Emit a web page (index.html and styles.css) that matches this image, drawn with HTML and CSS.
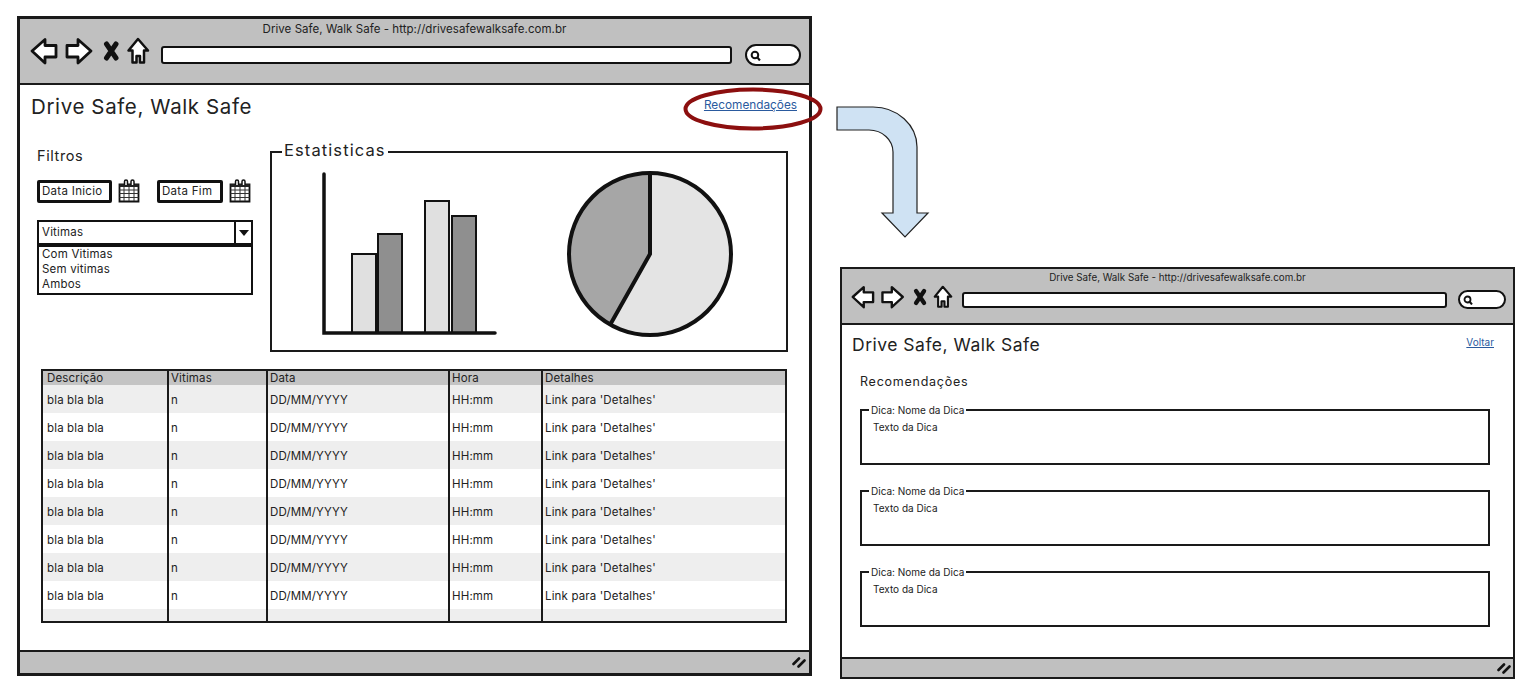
FILE: index.html
```html
<!DOCTYPE html>
<html lang="pt-BR">
<head>
  <meta charset="UTF-8">
  <title>Drive Safe, Walk Safe</title>
  <link rel="stylesheet" href="styles.css">
</head>
<body>
  <svg class="defs" width="0" height="0">
    <symbol id="toolbar-icons" viewBox="30 36 120 28">
      <path d="M32 50 L45 38.500 V44.500 H56 V56 H45 V62 Z" fill="#fff" stroke="#111" stroke-width="2.800" stroke-linejoin="round"/>
      <path d="M91 50 L78 38.500 V44.500 H67 V56 H78 V62 Z" fill="#fff" stroke="#111" stroke-width="2.800" stroke-linejoin="round"/>
      <path d="M106.500 43 L116 57 M116 43 L106.500 57" fill="none" stroke="#111" stroke-width="5" stroke-linecap="round"/>
      <path d="M138 38 L128.500 49.500 H132.500 V61.500 H136.500 V55 H140 V61.500 H144 V49.500 H148 Z" fill="#fff" stroke="#111" stroke-width="2.500" stroke-linejoin="round"/>
    </symbol>
    <symbol id="calendar" viewBox="0 0 22 24">
      <path d="M1.500 5.500 H20.500 V22.500 H1.500 Z" fill="#fff" stroke="#111" stroke-width="1.800"/>
      <path d="M1.500 11 H20.500 M1.500 14.500 H20.500 M1.500 18.500 H20.500 M6 8 V22 M11 8 V22 M16 8 V22" fill="none" stroke="#333" stroke-width="1"/>
      <path d="M1.500 5 H20.500 V8 H1.500 Z" fill="#222"/>
      <path d="M6.500 6 V2.500 A1.500 1.500 0 0 1 9.500 2.500 V6 M13 6 V2.500 A1.500 1.500 0 0 1 16 2.500 V6" fill="#fff" stroke="#111" stroke-width="1.500"/>
    </symbol>
    <symbol id="loupe" viewBox="0 0 10 10">
      <circle cx="4.500" cy="4.500" r="3" fill="none" stroke="#111" stroke-width="1.800"/>
      <path d="M6.500 6.500 L9 9.500" stroke="#111" stroke-width="2"/>
    </symbol>
    <symbol id="grip" viewBox="0 0 14 11">
      <path d="M1.500 7 L7 1.500 M6.500 9.500 L12.500 3.500" stroke="#111" stroke-width="2.600" stroke-linecap="round"/>
    </symbol>
  </svg>

  <section class="window window-main">
    <header class="titlebar">
      <div class="caption">Drive Safe, Walk Safe - http://drivesafewalksafe.com.br</div>
      <div class="toolbar">
        <svg class="tool-icons"><use href="#toolbar-icons"/></svg>
        <div class="urlbar"></div>
        <div class="search"><svg class="loupe"><use href="#loupe"/></svg></div>
      </div>
    </header>
    <main class="content">
      <div class="page-head">
        <h1>Drive Safe, Walk Safe</h1>
        <a class="link" href="#">Recomendações</a>
      </div>
      <div class="panels">
        <div class="filters">
          <h2>Filtros</h2>
          <div class="dates">
            <span class="date date-start">Data Inicio</span>
            <svg class="cal"><use href="#calendar"/></svg>
            <span class="date date-end">Data Fim</span>
            <svg class="cal"><use href="#calendar"/></svg>
          </div>
          <div class="select">
            <span class="select-value">Vitimas</span>
            <span class="select-arrow"></span>
          </div>
          <ul class="options">
            <li>Com Vitimas</li>
            <li>Sem vitimas</li>
            <li>Ambos</li>
          </ul>
        </div>
        <fieldset class="stats">
          <legend>Estatisticas</legend>
          <svg class="charts" viewBox="272 162 514 188">
            <g stroke="#111" stroke-width="2">
              <rect x="352" y="254" width="24" height="79" fill="#e0e0e0"/>
              <rect x="378" y="234" width="24" height="99" fill="#8f8f8f"/>
              <rect x="425" y="201" width="24" height="132" fill="#e0e0e0"/>
              <rect x="452" y="216" width="24" height="117" fill="#8f8f8f"/>
            </g>
            <path d="M324 174 V333 H495" fill="none" stroke="#111" stroke-width="3.500" stroke-linecap="round"/>
            <circle cx="650" cy="254" r="81" fill="#e4e4e4"/>
            <path d="M650 173 V254 L610 325 A81 81 0 0 1 650 173 Z" fill="#a6a6a6"/>
            <path d="M650 173 V254 L610 325" fill="none" stroke="#111" stroke-width="4"/>
            <circle cx="650" cy="254" r="81" fill="none" stroke="#111" stroke-width="4"/>
          </svg>
        </fieldset>
      </div>
      <table class="grid">
        <colgroup>
          <col class="col-desc"><col class="col-vit"><col class="col-data"><col class="col-hora"><col class="col-det">
        </colgroup>
        <thead>
          <tr><th>Descrição</th><th>Vitimas</th><th>Data</th><th>Hora</th><th>Detalhes</th></tr>
        </thead>
        <tbody>
          <tr><td>bla bla bla</td><td>n</td><td>DD/MM/YYYY</td><td>HH:mm</td><td>Link para 'Detalhes'</td></tr>
          <tr><td>bla bla bla</td><td>n</td><td>DD/MM/YYYY</td><td>HH:mm</td><td>Link para 'Detalhes'</td></tr>
          <tr><td>bla bla bla</td><td>n</td><td>DD/MM/YYYY</td><td>HH:mm</td><td>Link para 'Detalhes'</td></tr>
          <tr><td>bla bla bla</td><td>n</td><td>DD/MM/YYYY</td><td>HH:mm</td><td>Link para 'Detalhes'</td></tr>
          <tr><td>bla bla bla</td><td>n</td><td>DD/MM/YYYY</td><td>HH:mm</td><td>Link para 'Detalhes'</td></tr>
          <tr><td>bla bla bla</td><td>n</td><td>DD/MM/YYYY</td><td>HH:mm</td><td>Link para 'Detalhes'</td></tr>
          <tr><td>bla bla bla</td><td>n</td><td>DD/MM/YYYY</td><td>HH:mm</td><td>Link para 'Detalhes'</td></tr>
          <tr><td>bla bla bla</td><td>n</td><td>DD/MM/YYYY</td><td>HH:mm</td><td>Link para 'Detalhes'</td></tr>
          <tr class="filler"><td></td><td></td><td></td><td></td><td></td></tr>
        </tbody>
      </table>
    </main>
    <footer class="statusbar"><svg class="grip"><use href="#grip"/></svg></footer>
  </section>

  <section class="window window-tips">
    <header class="titlebar">
      <div class="caption">Drive Safe, Walk Safe - http://drivesafewalksafe.com.br</div>
      <div class="toolbar">
        <svg class="tool-icons"><use href="#toolbar-icons"/></svg>
        <div class="urlbar"></div>
        <div class="search"><svg class="loupe"><use href="#loupe"/></svg></div>
      </div>
    </header>
    <main class="content">
      <div class="page-head">
        <h1>Drive Safe, Walk Safe</h1>
        <a class="link" href="#">Voltar</a>
      </div>
      <div class="tips">
        <h2>Recomendações</h2>
        <fieldset class="tip">
          <legend>Dica: Nome da Dica</legend>
          <p>Texto da Dica</p>
        </fieldset>
        <fieldset class="tip">
          <legend>Dica: Nome da Dica</legend>
          <p>Texto da Dica</p>
        </fieldset>
        <fieldset class="tip">
          <legend>Dica: Nome da Dica</legend>
          <p>Texto da Dica</p>
        </fieldset>
      </div>
    </main>
    <footer class="statusbar"><svg class="grip"><use href="#grip"/></svg></footer>
  </section>

  <svg class="ring" viewBox="0 0 140 44">
    <ellipse cx="70" cy="22" rx="67.500" ry="19.500" fill="none" stroke="#8c0f0f" stroke-width="4"/>
  </svg>
  <svg class="flow-arrow" viewBox="836 106 94 132">
    <path d="M837 107 H873 A44 40 0 0 1 917 147 V213 H928 L905 237 L882 213 H893 V152 A24 22 0 0 0 869 130 H837 Z" fill="#cfe2f3" stroke="#222" stroke-width="1.200"/>
  </svg>
</body>
</html>
```

FILE: styles.css
```css
* {margin: 0; padding: 0; box-sizing: border-box;}
html, body {height: 100%;}
body {
  position: relative;
  background: #fff;
  color: #222;
  font-family: Inter, "Liberation Sans", sans-serif;
  overflow: hidden;
}
li {list-style: none;}
.defs {position: absolute;}

/* windows sit free on the canvas */
.window {
  position: absolute;
  display: flex;
  flex-direction: column;
  background: #fff;
  border: 3px solid #1a1a1a;
}
.window-main {left: 17px; top: 16px; width: 795px; height: 660px;}
.window-tips {left: 840px; top: 267px; width: 675px; height: 412px; border-width: 2px;}

.titlebar {
  background: #c0c0c0;
  border-bottom: 2px solid #1a1a1a;
}
.caption {text-align: center; font-weight: 400;}
.toolbar {display: flex; align-items: flex-end;}
.urlbar {
  background: #fff;
  border: 2.5px solid #111;
  border-radius: 3px;
}
.search {
  display: flex;
  align-items: center;
  background: #fff;
  border: 2.5px solid #111;
  border-radius: 12px;
}
.content {flex: 1;}
.page-head {display: flex; align-items: center; justify-content: space-between;}
h1 {font-weight: 400;}
h2 {font-weight: 400;}
.link {color: #2a5a9e;}
.statusbar {
  display: flex;
  justify-content: flex-end;
  align-items: center;
  background: #c0c0c0;
  border-top: 2px solid #1a1a1a;
}
.grip {width: 14px; height: 11px;}

/* main window */
.window-main .titlebar {height: 66px; padding-top: 2px;}
.window-main .caption {font-size: 11.500px; line-height: 16px; letter-spacing: .05px;}
.window-main .toolbar {height: 29px; padding-left: 10px;}
.window-main .tool-icons {width: 120px; height: 28px; margin-bottom: 1px;}
.window-main .urlbar {width: 571px; height: 18px; margin: 0 13px 2px 11px;}
.window-main .search {width: 56px; height: 22px; padding-left: 3px;}
.window-main .loupe {width: 11px; height: 11px;}
.window-main .page-head {height: 42px; padding: 0 12px 0 11px;}
.window-main h1 {font-size: 20.500px; letter-spacing: .62px;}
.window-main .link {font-size: 11.800px; margin-bottom: 2px;}
.window-main .statusbar {height: 23px; padding-right: 3px;}

.panels {display: flex; gap: 17px; padding: 15px 0 0 17px;}
.filters {width: 216px;}
.filters h2 {font-size: 14.500px; line-height: 28px; letter-spacing: .6px;}
.dates {display: flex; align-items: center; margin-top: 9px; font-size: 11.500px; letter-spacing: .3px;}
.date {
  display: block;
  height: 23px;
  line-height: 17px;
  padding-left: 2px;
  background: #fff;
  border: 3px solid #111;
  border-radius: 2px;
  white-space: nowrap;
}
.date-start {width: 75px;}
.date-end {width: 66px; margin-left: 17px;}
.cal {width: 22px; height: 24px; margin-left: 6px;}
.select {
  display: flex;
  height: 25px;
  margin-top: 17px;
  border: 2px solid #111;
  font-size: 11.500px;
  line-height: 21px;
  letter-spacing: .2px;
}
.select-value {flex: 1; padding-left: 3px;}
.select-arrow {
  position: relative;
  width: 17px;
  border-left: 2px solid #111;
}
.select-arrow::after {
  content: "";
  position: absolute;
  left: 3px;
  top: 8px;
  border: 5px solid transparent;
  border-top: 6px solid #111;
  border-bottom: 0;
}
.options {
  height: 50px;
  padding: 0 0 0 3px;
  border: 2px solid #111;
  font-size: 11.500px;
  line-height: 15px;
  letter-spacing: .2px;
}

.stats {
  width: 518px;
  height: 210px;
  border: 2px solid #1a1a1a;
}
.stats legend {
  position: relative;
  top: -2px;
  margin-left: 10px;
  padding: 0 2px;
  font-size: 16.500px;
  line-height: 20px;
  letter-spacing: 1.100px;
}
.charts {display: block; width: 514px; height: 188px;}

.grid {
  width: 746px;
  margin: 17px 0 0 21px;
  table-layout: fixed;
  border-collapse: collapse;
  border: 2px solid #1a1a1a;
  font-size: 11.500px;
  letter-spacing: .15px;
}
.col-desc {width: 126px;}
.col-vit {width: 99px;}
.col-data {width: 182px;}
.col-hora {width: 93px;}
.grid th, .grid td {
  padding: 0 0 0 2px;
  border-left: 2px solid #1a1a1a;
  text-align: left;
  font-weight: 400;
  white-space: nowrap;
}
.grid th:first-child, .grid td:first-child {padding-left: 4px;}
.grid th {height: 14px; line-height: 14px; background: #c4c4c4;}
.grid td {height: 28px; padding-top: 2px; background: #fff;}
.grid tbody tr:nth-child(odd) td {background: #eee;}
.grid .filler td {height: 13px; padding-top: 0;}

/* tips window */
.window-tips .titlebar {height: 56px; padding-top: 2px;}
.window-tips .caption {font-size: 9.800px; line-height: 14px;}
.window-tips .toolbar {height: 24px; padding-left: 9px;}
.window-tips .tool-icons {width: 102px; height: 24px;}
.window-tips .urlbar {width: 485px; height: 16px; margin: 0 11px 1px 9px; border-width: 2px;}
.window-tips .search {width: 48px; height: 19px; padding-left: 3px; border-width: 2px;}
.window-tips .loupe {width: 10px; height: 10px;}
.window-tips .page-head {height: 38px; padding: 0 19px 0 10px;}
.window-tips h1 {font-size: 17.500px; letter-spacing: .5px;}
.window-tips .link {font-size: 10px; margin-bottom: 4px;}
.window-tips .statusbar {height: 20px; padding-right: 2px;}

.tips {padding: 11px 23px 0 18px; font-size: 10px;}
.tips h2 {font-size: 12.500px; line-height: 16px; margin-bottom: 14px; letter-spacing: .75px;}
.tip {height: 61px; margin-bottom: 20px; border: 2px solid #1a1a1a;}
.tip legend {margin-left: 7px; padding: 0 2px; line-height: 12px;}
.tip p {padding: 4px 0 0 11px; line-height: 14px;}

/* annotations over the windows */
.ring {position: absolute; left: 683px; top: 87px; width: 140px; height: 44px;}
.flow-arrow {position: absolute; left: 836px; top: 106px; width: 94px; height: 132px;}
```
